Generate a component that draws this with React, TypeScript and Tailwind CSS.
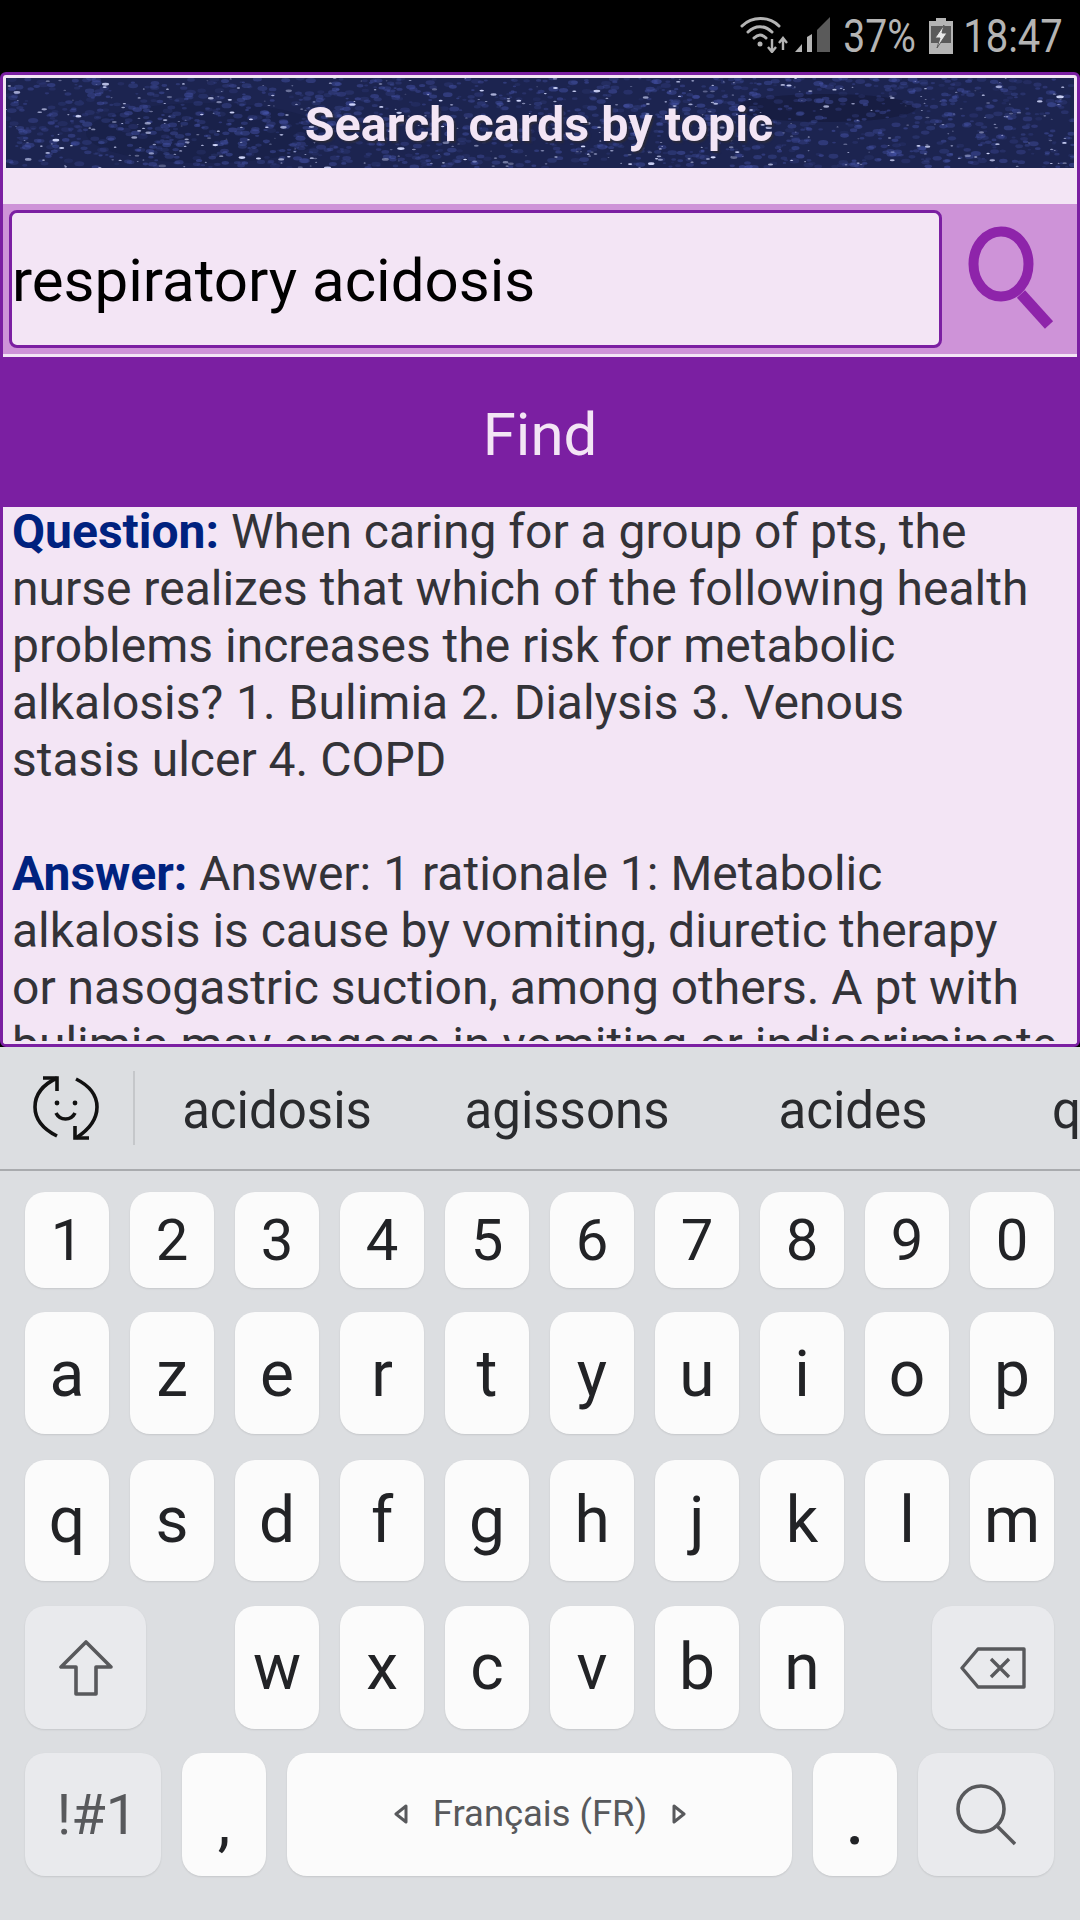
const rnd = (() => { let s = 12345; return () => { s = (s * 1664525 + 1013904223) % 4294967296; return s / 4294967296; }; })();
const haze = Array.from({ length: 1500 }, () => ({ x: rnd() * 1068, y: rnd() * 90, r: 1 + rnd() * 2.2, o: 0.12 + rnd() * 0.35 }));
const stars = Array.from({ length: 420 }, () => ({ x: rnd() * 1068, y: rnd() * 90, r: 0.5 + rnd() * rnd() * 1.5, o: 0.3 + rnd() * 0.7 }));

const Key = ({ c, gray, w = "w-[84px]", cls = "" }: { c?: React.ReactNode; gray?: boolean; w?: string; cls?: string }) => (
  <div className={`${w} h-full shrink-0 flex items-center justify-center rounded-[20px] shadow-[0_1px_2px_rgba(0,0,0,0.1)] text-[#222326] ${gray ? "bg-[#e9eaed]" : "bg-[#fbfbfb]"} ${cls}`}>{c}</div>
);

const Row = ({ keys, h, mt, size, pad = "" }: { keys: string; h: string; mt: string; size: string; pad?: string }) => (
  <div className={`flex gap-[21px] pl-[25px] ${h} ${mt} ${size}`}>
    {keys.split("").map((k) => <Key key={k} c={k} cls={pad} />)}
  </div>
);

export default function App() {
  return (
    <div className="w-[1080px] h-[1920px] overflow-hidden flex flex-col bg-black font-['Roboto',sans-serif]">
      {/* status bar */}
      <div className="h-[72px] shrink-0 bg-black flex items-start justify-end pr-[18px] pt-[17px] text-[#b4b4b4] text-[46px] leading-[36px]">
        <svg width="92" height="36" viewBox="0 0 92 36" className="mr-[13px]" fill="none">
          <path d="M2 9C12 -1 29 -1 39 9" stroke="#b4b4b4" strokeWidth="3" strokeLinecap="round" />
          <path d="M8 15C15 8 25 8 32 15" stroke="#b4b4b4" strokeWidth="3" strokeLinecap="round" />
          <path d="M14 21C18 17 22 17 26 21" stroke="#b4b4b4" strokeWidth="3" strokeLinecap="round" />
          <circle cx="20" cy="27" r="2.5" fill="#b4b4b4" />
          <path d="M32 22V34M28 30L32 35L36 30" stroke="#b4b4b4" strokeWidth="2.4" />
          <path d="M43 33V22M39 26L43 21L47 26" stroke="#b4b4b4" strokeWidth="2.4" />
          <path d="M55 35L62 27V35Z" fill="#b4b4b4" />
          <path d="M67 35V20L72 17V35Z" fill="#b4b4b4" />
          <path d="M77 35V13L90 0V35Z" fill="#5a5a5a" />
        </svg>
        <span className="w-[69px] mr-[15px] shrink-0 flex justify-center whitespace-nowrap [transform:scaleX(0.85)] pt-[1px]">37%</span>
        <svg width="24" height="36" viewBox="0 0 24 36" className="mr-[11px] mt-[1px]">
          <path d="M7 0H17V3H24V36H0V3H7Z" fill="#b4b4b4" />
          <rect x="2" y="8" width="20" height="17" fill="#5a5a5a" />
          <path d="M15 7L6 20H11L8 30L18 15H13Z" fill="#e8e8e8" stroke="#5a5a5a" strokeWidth="1" />
        </svg>
        <span className="w-[98px] shrink-0 flex justify-center whitespace-nowrap [transform:scaleX(0.87)] pt-[1px]">18:47</span>
      </div>

      {/* app panel */}
      <div className="h-[975px] shrink-0 border-[3px] border-[#7b1fa2] rounded-[6px] bg-[#f3e5f5] flex flex-col overflow-hidden">
        <div className="relative h-[90px] mt-[3px] mx-[3px] shrink-0 bg-[#1c2450] flex items-center justify-center overflow-hidden">
          <svg className="absolute inset-0" width="1068" height="90" viewBox="0 0 1068 90">
            <ellipse cx="200" cy="55" rx="120" ry="30" fill="#19214a" />
            <ellipse cx="820" cy="30" rx="90" ry="14" fill="#171d42" />
            {haze.map((s, i) => <ellipse key={i} cx={s.x} cy={s.y} rx={s.r * 1.6} ry={s.r * 0.8} fill="#4a58b0" opacity={s.o} />)}
            {stars.map((s, i) => <ellipse key={i} cx={s.x} cy={s.y} rx={s.r * 2} ry={s.r * 0.8} fill="#d5dbff" opacity={s.o} />)}
          </svg>
          <span className="relative top-[2px] -left-[1px] text-[48.5px] font-bold text-[#f3e5f5] [text-shadow:2px_2px_2px_#2a2a3a]">Search cards by topic</span>
        </div>
        <div className="h-[36px] shrink-0" />
        <div className="h-[150px] shrink-0 bg-[#ce93d8] flex py-[6px] pl-[6px]">
          <div className="w-[933px] shrink-0 border-[3px] border-[#7b1fa2] rounded-[8px] bg-[#f3e5f5] flex items-center pt-[3px] text-[60px] text-black">respiratory acidosis</div>
          <svg width="90" height="110" viewBox="0 0 90 110" className="ml-[26px] mt-[10px]">
            <ellipse cx="33" cy="44" rx="27.5" ry="32.5" fill="none" stroke="#8e24aa" strokeWidth="10" />
            <path d="M53 74L81 105" stroke="#8e24aa" strokeWidth="11" />
          </svg>
        </div>
        <div className="h-[3px] shrink-0" />
        <div className="h-[150px] shrink-0 bg-[#7b1fa2] flex items-center justify-center pt-[5px] text-[60px] text-[#f3e5f5]">Find</div>
        <div className="flex-1 min-h-0 overflow-hidden pl-[9px] -mt-[4px] text-[48px] leading-[57px] text-[#333338] whitespace-nowrap">
          <b className="text-[#00227f]">Question:</b> When caring for a group of pts, the<br />
          nurse realizes that which of the following health<br />
          problems increases the risk for metabolic<br />
          <span className="[word-spacing:1px]">alkalosis? 1. Bulimia 2. Dialysis 3. Venous</span><br />
          stasis ulcer 4. COPD
          <br /><br />
          <b className="text-[#00227f]">Answer:</b> Answer: 1 rationale 1: Metabolic<br />
          alkalosis is cause by vomiting, diuretic therapy<br />
          or nasogastric suction, among others. A pt with<br />
          bulimia may engage in vomiting or indiscriminate
        </div>
        <div className="h-[3px] shrink-0 bg-[#f3e5f5]" />
      </div>

      {/* keyboard */}
      <div className="flex-1 bg-[#dcdee1] flex flex-col">
        <div className="h-[124px] shrink-0 border-b-2 border-[#a9abae] flex items-center text-[51px] text-[#2a2b2e] overflow-hidden whitespace-nowrap">
          <div className="w-[133px] shrink-0 flex items-center pl-[33px]">
            <svg width="66" height="66" viewBox="0 0 66 66" fill="none" stroke="#111" strokeWidth="3.6">
              <path d="M24 3C9 10 2 20 2 32C2 44 10 54 24 61" />
              <path d="M10 3H24V16" />
              <path d="M43 4C57 11 64 20 64 32C64 44 57 54 43 63" />
              <path d="M42 51V63H56" />
              <circle cx="24" cy="28" r="2.4" fill="#111" stroke="none" />
              <circle cx="42" cy="28" r="2.4" fill="#111" stroke="none" />
              <path d="M23 38C27 46 38 46 42 38" />
            </svg>
          </div>
          <div className="w-[2px] h-[74px] shrink-0 bg-[#c5c7ca]" />
          <div className="w-[284px] shrink-0 text-center pt-[6px]">acidosis</div>
          <div className="w-[296px] shrink-0 text-center pt-[6px]">agissons</div>
          <div className="w-[276px] shrink-0 text-center pt-[6px]">acides</div>
          <div className="pl-[61px] pt-[6px]">q</div>
        </div>
        <Row keys="1234567890" h="h-[96px]" mt="mt-[21px]" size="text-[58px]" />
        <Row keys="azertyuiop" h="h-[122px]" mt="mt-[24px]" size="text-[64px]" pad="pt-[4px]" />
        <Row keys="qsdfghjklm" h="h-[121px]" mt="mt-[26px]" size="text-[64px]" />
        <div className="flex gap-[21px] pl-[25px] pr-[26px] h-[123px] mt-[25px] text-[64px]">
          <Key w="w-[121px]" gray c={
            <svg width="54" height="56" viewBox="0 0 54 56" fill="none" stroke="#58595c" strokeWidth="3.6" strokeLinejoin="round">
              <path d="M27 2L2 27H17V54H37V27H52Z" />
            </svg>
          } />
          <div className="w-[47px] shrink-0" />
          {"wxcvbn".split("").map((k) => <Key key={k} c={k} />)}
          <Key w="w-[122px]" gray cls="ml-auto" c={
            <svg width="66" height="42" viewBox="0 0 66 42" fill="none" stroke="#58595c" strokeWidth="3.4" strokeLinejoin="round">
              <path d="M64 2H18L2 21L18 40H64Z" />
              <path d="M31 12L49 30M49 12L31 30" />
            </svg>
          } />
        </div>
        <div className="flex gap-[21px] pl-[25px] pr-[26px] h-[123px] mt-[24px] text-[64px]">
          <Key w="w-[136px]" gray c={<span className="pl-[8px] text-[56px] text-[#58595c]">!#1</span>} />
          <Key c={<span className="pt-[16px]">,</span>} />
          <Key w="w-[505px]" c={
            <div className="flex items-center pl-[1px] text-[36.4px] text-[#58595c]">
              <svg width="14" height="20" viewBox="0 0 14 20" fill="none" stroke="#58595c" strokeWidth="3" strokeLinejoin="round"><path d="M12 2L2 10L12 18Z" /></svg>
              <span className="mx-[25px]">Français (FR)</span>
              <svg width="14" height="20" viewBox="0 0 14 20" fill="none" stroke="#58595c" strokeWidth="3" strokeLinejoin="round"><path d="M2 2L12 10L2 18Z" /></svg>
            </div>
          } />
          <Key c={<span className="pt-[16px] font-medium">.</span>} />
          <Key w="w-[136px]" gray c={
            <svg width="60" height="62" viewBox="0 0 60 62" fill="none" stroke="#58595c" strokeWidth="3.6">
              <circle cx="25" cy="25" r="23" />
              <path d="M41 42L59 60" />
            </svg>
          } />
        </div>
      </div>
    </div>
  );
}
